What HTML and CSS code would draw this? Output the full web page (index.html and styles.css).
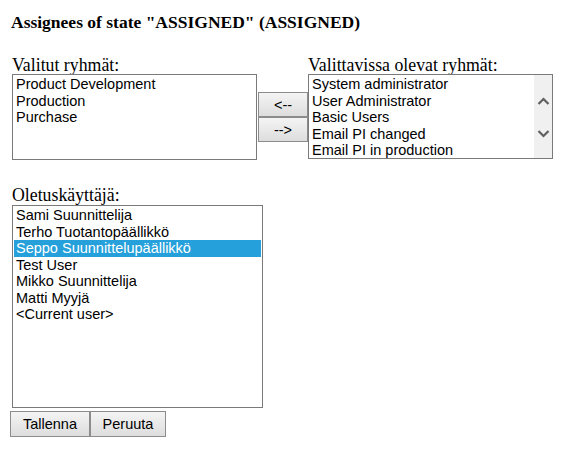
FILE: index.html
```html
<!DOCTYPE html>
<html lang="fi">
<head>
    <meta charset="UTF-8">
    <title>Assignees</title>
    <link rel="stylesheet" href="styles.css">
</head>
<body>
    <h1 class="title">Assignees of state "ASSIGNED" (ASSIGNED)</h1>

    <div class="groups">
        <div class="caption">Valitut ryhmät:</div>
        <div></div>
        <div class="caption">Valittavissa olevat ryhmät:</div>

        <ul class="listbox group-list">
            <li>Product Development</li>
            <li>Production</li>
            <li>Purchase</li>
        </ul>
        <div class="move-buttons">
            <button class="button move">&lt;--</button>
            <button class="button move">--&gt;</button>
        </div>
        <div class="listbox group-list scrolling">
            <ul>
                <li>System administrator</li>
                <li>User Administrator</li>
                <li>Basic Users</li>
                <li>Email PI changed</li>
                <li>Email PI in production</li>
            </ul>
            <div class="scrollbar">
                <svg width="13" height="9" viewBox="0 0 13 9"><path d="M1.5 7 L6.5 2 L11.5 7" fill="none" stroke="#606060" stroke-width="2.2"/></svg>
                <svg width="13" height="9" viewBox="0 0 13 9"><path d="M1.5 2 L6.5 7 L11.5 2" fill="none" stroke="#606060" stroke-width="2.2"/></svg>
            </div>
        </div>
    </div>

    <div class="default-user">
        <div class="caption">Oletuskäyttäjä:</div>
        <ul class="listbox user-list">
            <li>Sami Suunnittelija</li>
            <li>Terho Tuotantopäällikkö</li>
            <li class="selected">Seppo Suunnittelupäällikkö</li>
            <li>Test User</li>
            <li>Mikko Suunnittelija</li>
            <li>Matti Myyjä</li>
            <li>&lt;Current user&gt;</li>
        </ul>
    </div>

    <div class="actions">
        <button class="button save">Tallenna</button>
        <button class="button cancel">Peruuta</button>
    </div>
</body>
</html>
```

FILE: styles.css
```css
body {
    margin: 0;
    padding: 0;
    background-color: #FFFFFF;
    font-family: "Liberation Serif", serif;
    color: #000000;
}

.title {
    font-size: 17.5px;
    font-weight: bold;
    margin: 0;
    padding: 12px 0 0 11px;
    line-height: 20px;
}

.caption {
    font-size: 17.8px;
    line-height: 18px;
}

.groups {
    display: grid;
    grid-template-columns: 245px 51px 245px;
    margin: 24px 0 0 12px;
}

.listbox {
    list-style: none;
    margin: 0;
    padding: 1px 0 0 0;
    border: 1px solid #7A7A7A;
    background-color: #FFFFFF;
    font-family: "Liberation Sans", Arial, sans-serif;
    font-size: 14.5px;
    line-height: 16.5px;
    overflow: hidden;
}

.listbox ul {
    list-style: none;
    margin: 0;
    padding: 0;
    flex: 1;
}

.listbox li {
    padding-left: 3px;
    white-space: nowrap;
}

.group-list {
    height: 83px;
}

.scrolling {
    display: flex;
    padding: 0;
}

.scrolling ul {
    padding-top: 1px;
}

/* grey track with up/down chevrons */
.scrollbar {
    width: 18px;
    background-color: #F0F0F0;
    display: flex;
    flex-direction: column;
    align-items: center;
    justify-content: space-between;
    padding: 22px 0 20px 0;
}

.move-buttons {
    display: flex;
    flex-direction: column;
    justify-content: center;
    padding-left: 1px;
}

.button {
    font-family: "Liberation Sans", Arial, sans-serif;
    font-size: 14.5px;
    color: #000000;
    background: linear-gradient(#F4F4F4, #DDDDDD);
    border: 1px solid #8C8C8C;
    padding: 0;
    margin: 0;
}

.move {
    width: 50px;
    height: 25px;
}

.default-user {
    margin: 26px 0 0 12px;
}

.user-list {
    width: 247px;
    height: 200px;
    margin-top: 1px;
    padding: 1px 1px 0 1px;
}

.user-list li {
    padding-left: 2px;
}

.user-list .selected {
    background-color: #26A0DA;
    color: #FFFFFF;
}

.actions {
    display: flex;
    margin: 3px 0 0 10px;
}

.save {
    width: 80px;
    height: 26px;
}

.cancel {
    width: 76px;
    height: 26px;
}
```
